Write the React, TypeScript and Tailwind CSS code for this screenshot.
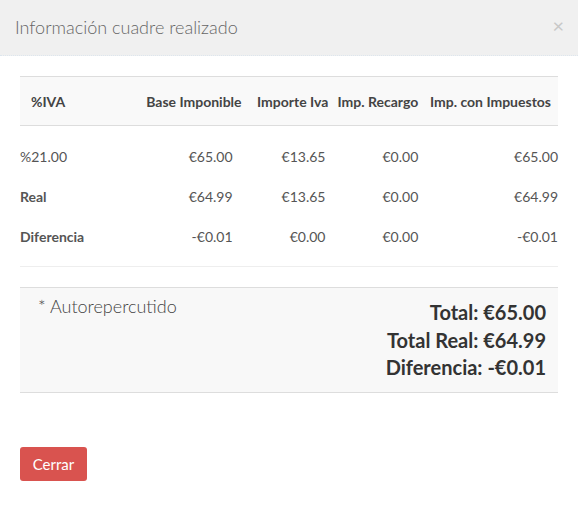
import React from "react";

const rows = [
  { label: "%21.00", bold: false, base: "€65.00", iva: "€13.65", rec: "€0.00", total: "€65.00" },
  { label: "Real", bold: true, base: "€64.99", iva: "€13.65", rec: "€0.00", total: "€64.99" },
  { label: "Diferencia", bold: true, base: "-€0.01", iva: "€0.00", rec: "€0.00", total: "-€0.01" },
];

const App = () => {
  return (
    <div className="w-[578px] h-[505px] bg-white text-[#555] font-['Lato',sans-serif]">
      <div className="h-[56px] bg-[#f0f0f0] border-b border-dotted border-[#dde6ee] flex items-center justify-between pl-[15px] pr-[14px]">
        <h4 className="text-[18px] font-light text-[#666]">Información cuadre realizado</h4>
        <span className="text-[20px] leading-none text-[#c8c8c8] -mt-[6px]">×</span>
      </div>

      <div className="px-[20px] pt-[20px]">
        <div className="border-t border-[#ddd]">
          <div className="h-[49px] bg-[#f9f9f9] border-b border-[#ddd] flex items-center text-[14px] font-bold text-[#444]">
            <div className="w-[120px] pl-[11px]">%IVA</div>
            <div className="w-[102px] text-right">Base Imponible</div>
            <div className="w-[87px] text-right">Importe Iva</div>
            <div className="w-[90px] text-right">Imp. Recargo</div>
            <div className="w-[140px] text-right pr-[7px]">Imp. con Impuestos</div>
          </div>
          <div className="py-[10px] border-b border-[#eee] text-[14px]">
            {rows.map((r) => (
              <div key={r.label} className="h-[40px] flex items-center">
                <div className={`w-[120px] ${r.bold ? "font-bold" : ""}`}>{r.label}</div>
                <div className="w-[102px] text-right pr-[9px]">{r.base}</div>
                <div className="w-[87px] text-right pr-[3px]">{r.iva}</div>
                <div className="w-[90px] text-right">{r.rec}</div>
                <div className="w-[140px] text-right">{r.total}</div>
              </div>
            ))}
          </div>
        </div>

        <div className="mt-[20px] border-y border-[#ddd] bg-[#f8f8f8] h-[106px] flex justify-between pl-[18px] pr-[12px]">
          <div className="pt-[6px] text-[18px] font-light text-[#444] leading-[24px]">* Autorepercutido</div>
          <div className="pt-[11px] text-right text-[20px] font-bold text-[#333] leading-[27.5px]">
            <div>Total: €65.00</div>
            <div>Total Real: €64.99</div>
            <div>Diferencia: -€0.01</div>
          </div>
        </div>

        <button className="mt-[54px] h-[34px] w-[67px] rounded-[3px] bg-[#d9534f] text-white text-[15px]">
          Cerrar
        </button>
      </div>
    </div>
  );
};

export default App;
